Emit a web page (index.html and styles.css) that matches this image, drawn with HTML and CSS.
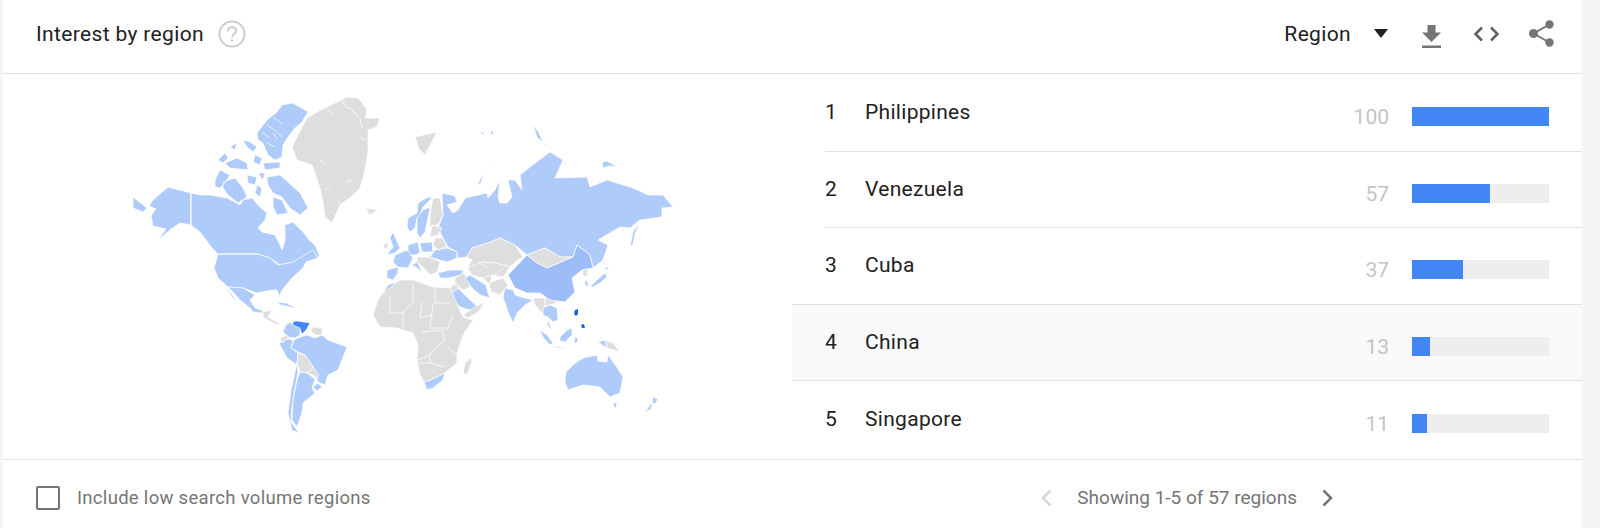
FILE: index.html
```html
<!DOCTYPE html>
<html lang="en">
<head>
<meta charset="utf-8">
<title>Interest by region</title>
<link rel="stylesheet" href="styles.css">
</head>
<body>
<main class="card">
  <header class="head">
    <h2 class="title">Interest by region</h2>
    <svg class="help" viewBox="0 0 28 28"><circle cx="14" cy="14" r="12.5"/><path d="M9.800 11.200c0-2.400 1.900-4 4.200-4s4.200 1.600 4.200 3.800c0 3-4.200 3.200-4.200 6.600"/><path d="M14 19.600v2.200"/></svg>
    <div class="tools">
      <span class="select">Region</span>
      <span class="caret"></span>
      <svg class="ico-dl" viewBox="0 0 19 23"><path d="M5.500 0h8v7.500H19L9.500 17 0 7.500h5.500z"/><rect y="20.500" width="19" height="2.500"/></svg>
      <svg class="ico-code" viewBox="0 0 27 16"><path d="M9 1.500 2.500 8 9 14.500M18 1.500 24.500 8 18 14.500"/></svg>
      <svg class="ico-share" viewBox="0 0 25 27"><circle cx="20.500" cy="4.500" r="4.200"/><circle cx="4.500" cy="13.500" r="4.500"/><circle cx="20.500" cy="22.500" r="4.200"/><path class="ln" d="M20.500 4.500 4.500 13.500l16 9"/></svg>
    </div>
  </header>
  <section class="body">
    <div class="map">
      <svg viewBox="3 74 789 384">
        <g class="lt">
          <path d="M133 197L147 208 143 212 133 208zM153 200L161 193 168 187 191 193V225L180 223 170 230 158 240 166 229 153 226 151 216 156 209 149 206z"/>
          <path d="M191 193L200 195 210 195 227 198 240 205 243 200 252 198 260 207 267 213 265 220 258 228 262 232 275 235 280 245 282 250 285 240V225L293 222 303 232 309 240 315 245 320 257 312 255 304 258 296 262 293 262 280 265 270 258 258 254H218L212 248 206 240 200 232 191 225z"/>
          <path d="M257 133L267 120 277 112 282 105 292 103 300 107 308 112 302 122 295 128 288 137 283 145 282 157 275 160 268 155 263 143 258 140zM218 160L225 153 228 158 223 163zM230 147L237 143 235 150zM243 140L250 142 257 147 253 152 247 147zM225 163L237 158 247 163 248 170 230 168zM255 155L262 158 260 165 253 162zM263 163L280 162V168L265 170zM215 180L220 170 230 175 225 183 220 188 215 187zM223 182L235 178 243 188 247 197 238 203 228 195 223 188zM247 175L257 177 255 185 248 183zM257 185L262 188 260 197 255 193zM258 173H265L263 180zM267 177L280 175 288 182 300 193 308 208 300 215 290 208 282 197 273 193 268 185zM273 197L282 200 288 213 277 215 273 207z"/>
          <path d="M218 254H258L270 258 278 265 293 262 313 250 318 258 306 262 303 268 293 277 286 285 281 292 280 297 277 290 272 290 262 292 257 293 243 288 228 287 218 278 214 268z"/>
          <path d="M228 287L243 288 255 295 250 300 255 308 262 310 263 313 253 312 251 309 240 300 232 291zM227 288L233 296 238 305 232 297 226 288z"/>
          <path d="M276 302L286 303 298 309 290 307 281 305z"/>
          <path d="M290 322L293 325 300 328V335L295 338 288 337 283 332 286 325z"/>
          <path d="M279 343L288 339 293 340 291 348 298 353 297 365 287 358z"/>
          <path d="M300 337L307 335 315 338 322 335 328 340 347 347 345 352 338 370 328 375 325 385 318 382 313 367 305 355 298 352 291 348 294 340z"/>
          <path d="M313 387L318 383 322 387 317 391z"/>
          <path d="M300 372L307 373 315 379 312 388 315 393 303 403 302 413 297 427 292 420 293 400 297 380z"/>
          <path d="M297 363L298 372 295 388 292 406 291 422 299 433 292 430 288 413 291 391z"/>
          <path d="M383 293L388 285 396 282 390 290z"/>
          <path d="M424 382L430 380 445 373 443 380 433 388 427 390z"/>
          <path d="M450 293L458 288 470 300 478 307 470 310 460 307 453 300z"/>
          <path d="M443 215L438 228 443 238 448 247 457 252 458 258 467 257 472 248 488 243 500 238 515 245 527 255 545 248 560 257 573 257 577 245 590 255 593 268 603 260 608 245 598 240 620 227 630 228 640 220 662 217V208L673 207 663 195H648L633 188 607 180 590 187 587 177 555 178 563 160 550 152 530 167 520 175 522 190 515 180H508L512 197 507 203H500L498 197 500 180 495 190 488 198 487 193 465 198 458 210 453 213 447 205 457 202 455 196 442 193z"/>
          <path d="M477 185L485 171 498 157 490 165 484 173 481 183zM533 125L539 133 543 143 552 147 545 145 537 137zM602 162L607 161 618 167 609 166 603 168zM630 247L633 232 640 222 635 234 633 244zM590 287L597 280 605 273 607 277 600 283 593 287zM605 267L610 268 606 270zM585 280L588 282V287L585 285zM481 131L486 135 493 134V129L489 135 481 134z"/>
          <path d="M407 227L408 218 417 213 418 203 428 197 432 198 423 207 420 215 417 218 415 228 410 232z"/>
          <path d="M417 233V218L423 210 430 207 428 218 425 232 420 238z"/>
          <path d="M430 257L435 250 447 248 457 252V258L447 262 440 260z"/>
          <path d="M420 243L432 242 433 252 422 252z"/>
          <path d="M408 245L418 242 420 253 415 255 408 255z"/>
          <path d="M395 255L407 250 413 258 408 268 398 267 393 262z"/>
          <path d="M390 238L393 232 400 248 395 253 387 255 393 247z"/>
          <path d="M387 270L398 267V273L393 280 387 278z"/>
          <path d="M412 265L417 262 423 273 427 277 420 270z"/>
          <path d="M438 273L450 270H463L462 275 448 278H440z"/>
        </g>
        <g class="gy">
          <path d="M292 147L299 133 307 118 317 112 327 107 337 102 347 97 358 98 363 104 367 110 365 118H380L377 127 368 130V152L365 170 360 188 351 197 340 205 336 214 332 223 325 217 323 202 320 188 316 176 312 165 297 160z"/>
          <path d="M365 208L378 210 370 215zM383 245L388 242V248L384 248zM415 137L437 132 425 155 419 149z"/>
          <path d="M263 312L272 310 268 317 282 325 275 324 263 317z"/>
          <path d="M280 338L287 335 288 338 282 343z"/>
          <path d="M312 327L322 328V335H315L311 331z"/>
          <path d="M298 353L305 355 313 367 307 373 300 372 297 363z"/>
          <path d="M307 373L313 367 319 375 317 378 313 375z"/>
          <path d="M383 293L400 280H413L433 287 450 288 463 317 473 320 463 335 457 353V363L445 373 430 380 424 382 420 375 417 360 418 345 413 333 397 328 380 327 373 315 378 300z"/>
          <path d="M471 357L472 362 467 375 463 372 465 363z"/>
          <path d="M430 215L433 198H440L443 215 438 225 430 227zM432 225L442 228 438 235 430 237zM435 238H443L447 247 438 250 433 245zM417 257H430L440 262 437 272 430 275 423 267 417 262z"/>
          <path d="M467 257L472 248 488 243 500 238 515 245 523 257 518 260 510 267 495 263 482 262V270L468 267 472 260z"/>
          <path d="M482 262L495 263 510 267 503 277 492 275 490 285 483 278 472 275 468 268zM488 283L503 278 508 285 500 295 492 292zM455 278L463 273 468 278 470 287 463 290 455 285zM463 315L473 308 485 302 478 312 468 318zM450 288L456 283 460 287 452 293z"/>
          <path d="M527 255L545 248 560 257H573L547 268 537 263z"/>
          <path d="M533 298H545V308L542 313 535 305zM545 298L553 296 557 303 550 305 545 306zM583 270L588 269 587 276 583 276z"/>
          <path d="M605 340L613 343 620 352 607 348z"/>
        </g>
        <g class="lt">
          <path d="M465 278L470 275 478 280 486 285 488 293 490 298 480 295 472 288z"/>
          <path d="M505 288L513 290 515 295 525 298 533 300 525 305 517 313 513 323 508 312 505 303 503 297z"/>
          <path d="M543 308L550 305 557 308 558 320 553 322 548 317 543 315zM540 330L547 335 553 343 550 345 543 337zM553 346L570 349 557 348zM560 337L567 330 572 328V335L565 342 560 341zM575 337L578 338 577 343 574 343zM598 342L605 340 607 348zM548 320L552 330 547 325z"/>
          <path d="M566 372L574 364 583 358 597 355 598 361 607 362 608 355 616 366 623 377 620 393 610 397 600 387 583 385 568 390 565 382zM613 403H617L616 408 614 407zM653 397L658 399 655 404 652 403zM645 412L650 405 653 403 651 409z"/>
        </g>
        <path class="cn" d="M508 275L527 255 537 263 547 268 573 257 577 245 590 255 593 268 582 270 572 278 575 292 565 302 550 300 540 293 527 293 515 288z"/>
        <path class="ve" d="M293 322L296 321 310 323 306 330 302 334 300 328 293 325z"/>
        <path class="ph" d="M575 310L578 309V314L576 316 574 314zM581 325L584 324 585 328 582 328z"/>
        <g class="seams">
          <path d="M191 193V225M218 254H258"/>
          <path d="M413 283V302L403 313M435 288V303H450M422 302L420 318 433 315M390 297V313H403V327M433 303L430 328H448L453 315M422 332L442 330 445 340 436 347 430 355 417 360M430 355V363L417 363M430 363L445 367M447 347L457 355"/>
          <path d="M267 125L277 132 282 137M273 117L282 124M273 133L278 140M267 143L275 147M262 132L270 138M342 100L346 107 352 109M327 108L333 114M352 110L358 117M360 118L362 128M366 140L359 137M320 160L325 164M325 190L330 186M340 205L337 199M352 180L346 182"/>
          <path d="M478 262L488 268M503 268L495 275M483 278L492 275"/>
        </g>
      </svg>
    </div>
    <ol class="list">
      <li class="row"><span class="rank">1</span><span class="name">Philippines</span><span class="val">100</span><span class="track"><span class="fill" style="width:100%"></span></span></li>
      <li class="row line"><span class="rank">2</span><span class="name">Venezuela</span><span class="val">57</span><span class="track"><span class="fill" style="width:57%"></span></span></li>
      <li class="row line"><span class="rank">3</span><span class="name">Cuba</span><span class="val">37</span><span class="track"><span class="fill" style="width:37%"></span></span></li>
      <li class="row wide hl"><span class="rank">4</span><span class="name">China</span><span class="val">13</span><span class="track"><span class="fill" style="width:13%"></span></span></li>
      <li class="row wide last"><span class="rank">5</span><span class="name">Singapore</span><span class="val">11</span><span class="track"><span class="fill" style="width:11%"></span></span></li>
    </ol>
  </section>
  <footer class="foot">
    <label class="check"><span class="box"></span><span>Include low search volume regions</span></label>
    <nav class="pager">
      <svg class="chev off" viewBox="0 0 11 18"><path d="M9.500 1.500 2 9l7.500 7.500"/></svg>
      <span>Showing 1-5 of 57 regions</span>
      <svg class="chev" viewBox="0 0 11 18"><path d="M1.500 1.500 9 9l-7.500 7.500"/></svg>
    </nav>
  </footer>
</main>
</body>
</html>
```
FILE: styles.css
```css
* { box-sizing: border-box; }
html, body { margin: 0; height: 100%; }
body { background: #f5f5f5; font-family: Roboto, "Liberation Sans", sans-serif; overflow: hidden; }
.card { margin-left: 3px; width: 1579px; height: 528px; background: #fff; display: flex; flex-direction: column; }
.head { height: 74px; flex: none; display: flex; align-items: center; padding: 0 28px 6px 33px; border-bottom: 1px solid #e0e0e0; }
.title { margin: 0; font-size: 21px; font-weight: 400; color: #212121; letter-spacing: .35px; }
.help { width: 28px; height: 28px; margin-left: 14px; fill: none; stroke: #ccc; stroke-width: 2; }
.tools { margin-left: auto; display: flex; align-items: center; }
.select { font-size: 21px; color: #212121; letter-spacing: .35px; }
.caret { margin-left: 23px; width: 0; height: 0; border: 7px solid transparent; border-top: 9px solid #212121; border-bottom: 0; }
.ico-dl { width: 19px; height: 23px; margin-left: 34px; margin-top: 6px; fill: #757575; }
.ico-code { width: 27px; height: 16px; margin-left: 32px; fill: none; stroke: #616161; stroke-width: 2.5; }
.ico-share { width: 25px; height: 27px; margin-left: 29px; fill: #757575; }
.ico-share .ln { fill: none; stroke: #757575; stroke-width: 2; }
.body { height: 385px; flex: none; display: flex; }
.map { width: 789px; flex: none; }
.map svg { display: block; width: 789px; height: 384px; filter: blur(.5px); }
.lt path { fill: #aecbfa; stroke: #fff; stroke-width: .7; stroke-linejoin: round; }
.gy path { fill: #dedede; stroke: #fff; stroke-width: .7; stroke-linejoin: round; }
.cn { fill: #9cbdf7; stroke: #fff; stroke-width: .8; stroke-linejoin: round; }
.ve { fill: #4285f4; stroke: #fff; stroke-width: .4; }
.ph { fill: #1a62e8; }
.seams path { fill: none; stroke: #fff; stroke-width: .9; opacity: .85; }
.list { flex: 1; margin: 0; padding: .6px 0 0; list-style: none; display: flex; flex-direction: column; }
.row { flex: none; height: 76.4px; margin-left: 33px; padding-right: 33px; display: flex; align-items: flex-start; font-size: 21px; color: #212121; letter-spacing: .3px; }
.last { flex: 1; padding-top: 1px; }
.line { border-top: 1px solid #e0e0e0; }
.wide { margin-left: 0; padding-left: 33px; border-top: 1px solid #e0e0e0; }
.hl { background: #f9f9f9; }
.rank { width: 40px; margin-top: 25px; line-height: 24px; }
.name { flex: 1; margin-top: 25px; line-height: 24px; }
.val { margin-top: 30px; line-height: 24px; color: #c4c4c4; letter-spacing: 0; }
.track { width: 137px; height: 19px; margin: 32px 0 0 23px; background: #eee; }
.fill { display: block; height: 100%; background: #4285f4; }
.foot { flex: 1; display: flex; align-items: center; justify-content: space-between; padding: 7px 249px 0 33px; border-top: 1px solid #e0e0e0; font-size: 18.500px; color: #757575; }
.check { display: flex; align-items: center; gap: 17px; letter-spacing: .3px; }
.box { width: 24px; height: 24px; border: 2.5px solid #757575; border-radius: 2px; }
.pager { display: flex; align-items: center; gap: 25px; font-size: 19px; }
.chev { width: 11px; height: 18px; fill: none; stroke: #757575; stroke-width: 2.5; }
.chev.off { stroke: #d6d6d6; }
```
